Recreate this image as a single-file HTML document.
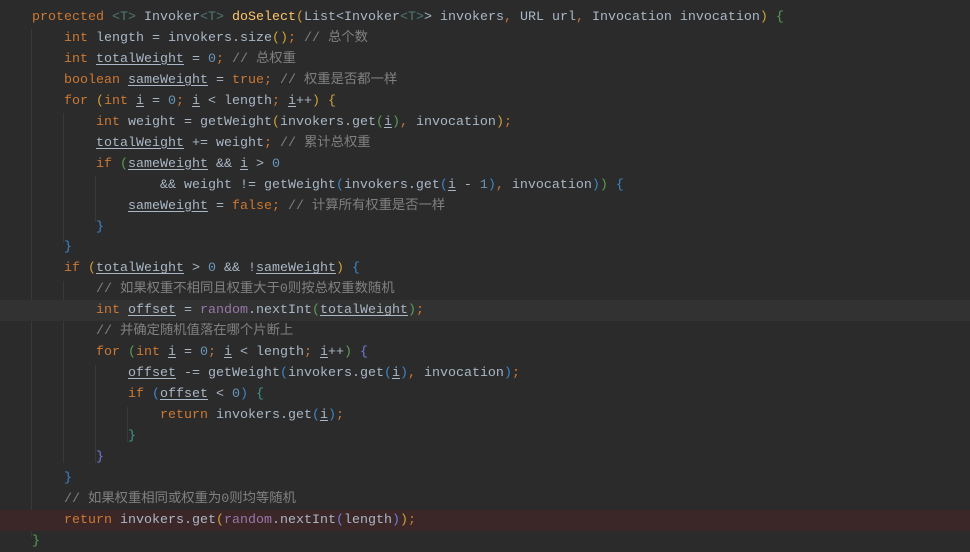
<!DOCTYPE html>
<html><head><meta charset="utf-8"><style>
html,body{margin:0;padding:0;background:#2b2b2b;width:970px;height:548px;overflow:hidden}
.c{position:absolute;left:0;top:7px;width:970px;font-family:"Liberation Mono","Noto Sans CJK SC",monospace;font-size:13.33px;color:#a9b7c6}
.l{height:20.96px;line-height:21px;white-space:pre;padding-left:32px;position:relative}
.cur{background:#323232}
.err{background:#3b2727}
.k{color:#cc7832}.n{color:#6897bb}.m{color:#ffc66d}.f{color:#9876aa}.t{color:#507874}
.cm{color:#808080;font-family:"Liberation Mono","Noto Sans CJK SC",monospace}
.u{text-decoration:underline;text-underline-offset:2px}
.Y{color:#d0a23a}.G{color:#5a9e57}.B{color:#3d86c6}.P{color:#6e7ed9}.T{color:#3a9a8a}
.g{position:absolute;width:1px;background:#393939}
</style></head><body>
<div class="g" style="left:31px;top:29px;height:508px"></div>
<div class="g" style="left:63px;top:113px;height:130px"></div>
<div class="g" style="left:95px;top:176px;height:46px"></div>
<div class="g" style="left:63px;top:281px;height:182px"></div>
<div class="g" style="left:95px;top:365px;height:98px"></div>
<div class="g" style="left:127px;top:407px;height:35px"></div>
<div class="c">
<div class="l"><span class="k">protected</span> <span class="t">&lt;T&gt;</span> Invoker<span class="t">&lt;T&gt;</span> <span class="m">doSelect</span><span class="Y">(</span>List&lt;Invoker<span class="t">&lt;T&gt;</span>&gt; invokers<span class="k">,</span> URL url<span class="k">,</span> Invocation invocation<span class="Y">)</span> <span class="G">{</span></div>
<div class="l">    <span class="k">int</span> length = invokers.size<span class="Y">()</span><span class="k">;</span> <span class="cm">// 总个数</span></div>
<div class="l">    <span class="k">int</span> <span class="u">totalWeight</span> = <span class="n">0</span><span class="k">;</span> <span class="cm">// 总权重</span></div>
<div class="l">    <span class="k">boolean</span> <span class="u">sameWeight</span> = <span class="k">true;</span> <span class="cm">// 权重是否都一样</span></div>
<div class="l">    <span class="k">for</span> <span class="Y">(</span><span class="k">int</span> <span class="u">i</span> = <span class="n">0</span><span class="k">;</span> <span class="u">i</span> &lt; length<span class="k">;</span> <span class="u">i</span>++<span class="Y">)</span> <span class="Y">{</span></div>
<div class="l">        <span class="k">int</span> weight = getWeight<span class="Y">(</span>invokers.get<span class="G">(</span><span class="u">i</span><span class="G">)</span><span class="k">,</span> invocation<span class="Y">)</span><span class="k">;</span></div>
<div class="l">        <span class="u">totalWeight</span> += weight<span class="k">;</span> <span class="cm">// 累计总权重</span></div>
<div class="l">        <span class="k">if</span> <span class="G">(</span><span class="u">sameWeight</span> &amp;&amp; <span class="u">i</span> &gt; <span class="n">0</span></div>
<div class="l">                &amp;&amp; weight != getWeight<span class="B">(</span>invokers.get<span class="B">(</span><span class="u">i</span> - <span class="n">1</span><span class="B">)</span><span class="k">,</span> invocation<span class="B">)</span><span class="G">)</span> <span class="B">{</span></div>
<div class="l">            <span class="u">sameWeight</span> = <span class="k">false;</span> <span class="cm">// 计算所有权重是否一样</span></div>
<div class="l">        <span class="B">}</span></div>
<div class="l">    <span class="B">}</span></div>
<div class="l">    <span class="k">if</span> <span class="Y">(</span><span class="u">totalWeight</span> &gt; <span class="n">0</span> &amp;&amp; !<span class="u">sameWeight</span><span class="Y">)</span> <span class="B">{</span></div>
<div class="l">        <span class="cm">// 如果权重不相同且权重大于0则按总权重数随机</span></div>
<div class="l cur">        <span class="k">int</span> <span class="u">offset</span> = <span class="f">random</span>.nextInt<span class="G">(</span><span class="u">totalWeight</span><span class="G">)</span><span class="k">;</span></div>
<div class="l">        <span class="cm">// 并确定随机值落在哪个片断上</span></div>
<div class="l">        <span class="k">for</span> <span class="G">(</span><span class="k">int</span> <span class="u">i</span> = <span class="n">0</span><span class="k">;</span> <span class="u">i</span> &lt; length<span class="k">;</span> <span class="u">i</span>++<span class="G">)</span> <span class="P">{</span></div>
<div class="l">            <span class="u">offset</span> -= getWeight<span class="B">(</span>invokers.get<span class="B">(</span><span class="u">i</span><span class="B">)</span><span class="k">,</span> invocation<span class="B">)</span><span class="k">;</span></div>
<div class="l">            <span class="k">if</span> <span class="B">(</span><span class="u">offset</span> &lt; <span class="n">0</span><span class="B">)</span> <span class="T">{</span></div>
<div class="l">                <span class="k">return</span> invokers.get<span class="B">(</span><span class="u">i</span><span class="B">)</span><span class="k">;</span></div>
<div class="l">            <span class="T">}</span></div>
<div class="l">        <span class="P">}</span></div>
<div class="l">    <span class="B">}</span></div>
<div class="l">    <span class="cm">// 如果权重相同或权重为0则均等随机</span></div>
<div class="l err">    <span class="k">return</span> invokers.get<span class="Y">(</span><span class="f">random</span>.nextInt<span class="P">(</span>length<span class="P">)</span><span class="Y">)</span><span class="k">;</span></div>
<div class="l"><span class="G">}</span></div>
</div>
</body></html>
